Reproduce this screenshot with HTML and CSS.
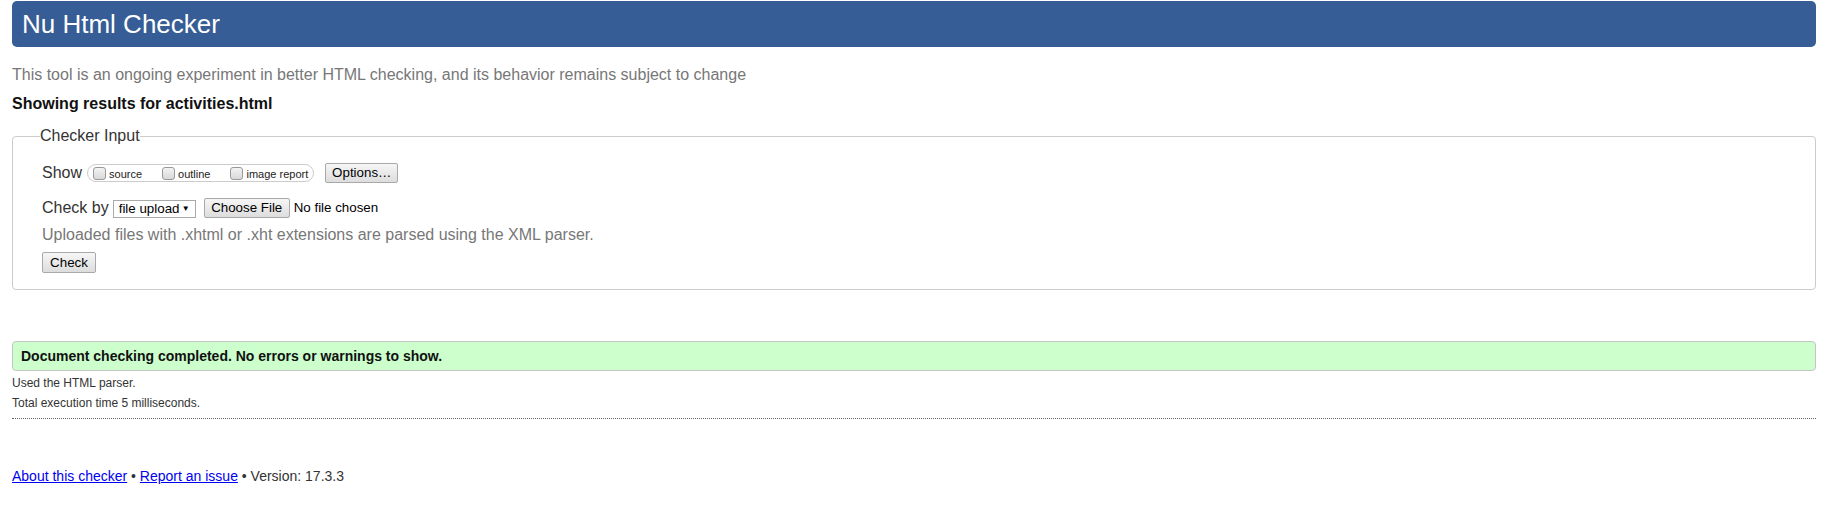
FILE: index.html
```html
<!DOCTYPE html>
<html lang="en">
<head>
<meta charset="utf-8">
<title>Nu Html Checker</title>
<link rel="stylesheet" href="styles.css">
</head>
<body>
<h1 class="site-title">Nu Html Checker</h1>
<p class="intro">This tool is an ongoing experiment in better HTML checking, and its behavior remains subject to change</p>
<p class="showing">Showing results for activities.html</p>
<form class="checker-form">
  <fieldset class="checker-input">
    <legend class="checker-legend">Checker Input</legend>
    <div class="row row-show">
      <span class="row-label">Show</span>
      <span class="pill">
        <label class="opt"><input type="checkbox" class="cb"><span class="opt-text">source</span></label>
        <label class="opt"><input type="checkbox" class="cb"><span class="opt-text">outline</span></label>
        <label class="opt"><input type="checkbox" class="cb"><span class="opt-text">image report</span></label>
      </span>
      <button type="button" class="btn btn-options">Options…</button>
    </div>
    <div class="row row-checkby">
      <span class="row-label">Check by</span>
      <span class="select-wrap"><select class="select"><option>file upload</option></select></span>
      <button type="button" class="btn btn-choose">Choose File</button>
      <span class="no-file">No file chosen</span>
    </div>
    <p class="hint">Uploaded files with .xhtml or .xht extensions are parsed using the XML parser.</p>
    <div class="row row-check">
      <button type="button" class="btn btn-check">Check</button>
    </div>
  </fieldset>
</form>
<p class="success">Document checking completed. No errors or warnings to show.</p>
<p class="meta">Used the HTML parser.</p>
<p class="meta">Total execution time 5 milliseconds.</p>
<hr class="divider">
<p class="footer"><a href="#" class="flink">About this checker</a> • <a href="#" class="flink">Report an issue</a> • Version: 17.3.3</p>
</body>
</html>
```
FILE: styles.css
```css
html, body {
  background: #fff;
}
body {
  margin: 0;
  padding: 1px 18px 0 12px;
  font-family: "Liberation Sans", Arial, sans-serif;
  color: #222;
  font-size: 16px;
  line-height: 18px;
}
.site-title {
  margin: 0;
  height: 46px;
  line-height: 46px;
  padding-left: 10px;
  background: #365d95;
  color: #fff;
  font-size: 26px;
  font-weight: normal;
  border-radius: 5px;
}
.intro {
  margin: 19px 0 0;
  color: #777;
}
.showing {
  margin: 11px 0 0;
  font-weight: bold;
  color: #111;
}
.checker-form {
  margin: 14px 0 0;
}
.checker-input {
  margin: 0;
  padding: 18px 29px 16px 29px;
  border: 1px solid #ccc;
  border-radius: 4px;
  min-width: 0;
}
.checker-legend {
  padding: 0;
  margin-left: -2px;
  line-height: 18px;
  color: #333;
}
.row {
  display: flex;
  align-items: center;
}
.row-show {
  height: 20px;
}
.row-label {
  color: #333;
  margin-right: 5px;
}
.pill {
  display: flex;
  align-items: center;
  height: 18px;
  box-sizing: border-box;
  border: 1px solid #ccc;
  border-radius: 9px;
  padding: 0 5px;
}
.opt {
  display: flex;
  align-items: center;
  margin-right: 20px;
}
.opt:last-child {
  margin-right: 0;
}
.cb {
  appearance: none;
  -webkit-appearance: none;
  margin: 0 3px 0 0;
  width: 13px;
  height: 13px;
  box-sizing: border-box;
  border: 1px solid #999;
  border-radius: 3px;
  background: linear-gradient(#f2f2f2, #d9d9d9);
}
.opt-text {
  font-size: 11px;
  line-height: 13px;
  color: #222;
  padding-top: 2px;
}
.btn {
  font-family: "Liberation Sans", Arial, sans-serif;
  font-size: 13.33px;
  color: #000;
  border: 1px solid #a9a9a9;
  border-radius: 2px;
  background: linear-gradient(#f6f6f6, #dddddd);
  padding: 0;
  height: 20px;
  line-height: 18px;
  box-sizing: border-box;
}
.btn-options {
  margin-left: 11px;
  width: 73px;
}
.row-checkby {
  margin-top: 15px;
  height: 20px;
}
.row-checkby .row-label {
  margin-right: 4px;
}
.select-wrap {
  position: relative;
  align-self: flex-end;
  display: block;
  height: 18px;
}
.select-wrap::after {
  content: "▼";
  position: absolute;
  right: 6px;
  top: 4px;
  font-size: 8px;
  line-height: 10px;
  color: #000;
  pointer-events: none;
}
.select {
  appearance: none;
  -webkit-appearance: none;
  display: block;
  width: 83px;
  height: 18px;
  box-sizing: border-box;
  border: 1px solid #a9a9a9;
  border-radius: 0;
  background: #fff;
  font-family: "Liberation Sans", Arial, sans-serif;
  font-size: 13.33px;
  line-height: 16px;
  padding: 0 0 0 5px;
  color: #000;
}
.btn-choose {
  margin-left: 8px;
  width: 86px;
}
.no-file {
  margin-left: 4px;
  font-size: 13.33px;
  color: #000;
}
.hint {
  margin: 8px 0 0;
  color: #777;
}
.row-check {
  margin-top: 8px;
}
.btn-check {
  width: 54px;
  height: 21px;
}
.success {
  margin: 51px 0 0;
  border: 1px solid #c4c4c4;
  border-radius: 4px;
  background: #ccffcc;
  padding: 6px 8px;
  font-size: 14px;
  line-height: 16px;
  font-weight: bold;
  color: #111;
}
.meta {
  margin: 4px 0 0;
  font-size: 12px;
  line-height: 16px;
  color: #333;
}
.success + .meta {
  margin-top: 4px;
}
.divider {
  margin: 7px 0 0;
  border: 0;
  border-top: 1px dotted #666;
  height: 0;
}
.footer {
  margin: 49px 0 0;
  font-size: 14px;
  line-height: 16px;
  color: #333;
}
.flink {
  color: #0000ee;
}
```
